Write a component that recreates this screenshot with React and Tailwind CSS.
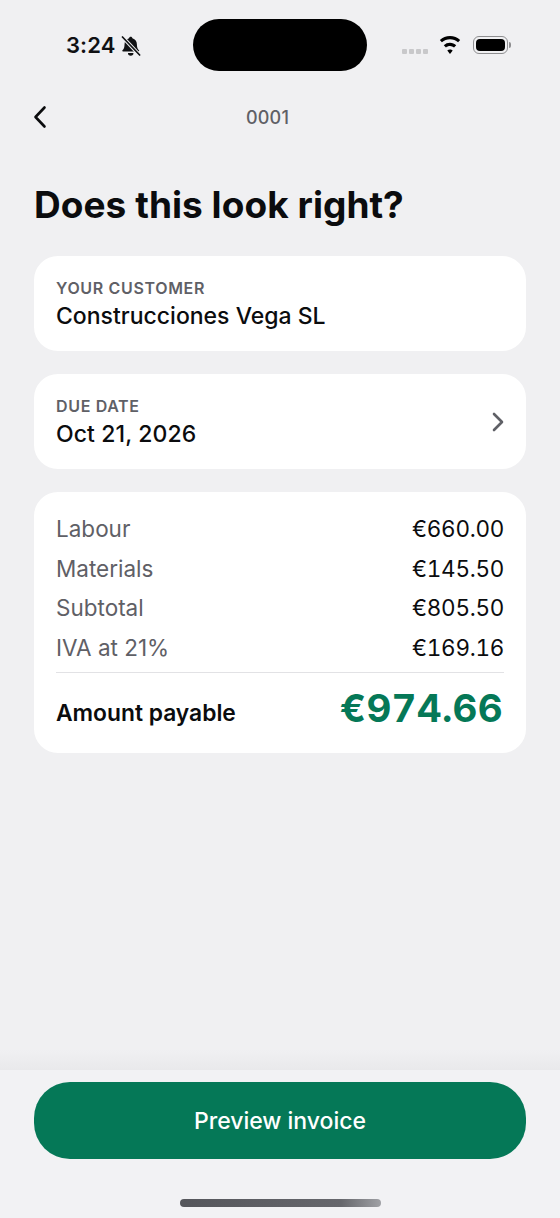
import React from "react";

const rows = [
  ["Labour", "€660.00"],
  ["Materials", "€145.50"],
  ["Subtotal", "€805.50"],
  ["IVA at 21%", "€169.16"],
];

function MutedBell() {
  return (
    <svg width="20" height="20" viewBox="2 1 16.500 17.500" className="ml-[6px] mt-[2px]">
      <path d="M10 1.600c.8 0 1.400.6 1.500 1.300 2.500.7 3.900 2.800 3.900 5.400 0 2.800.6 4 1.800 5.200.4.4.1 1-.4 1H3.200c-.5 0-.8-.6-.4-1C4 12.300 4.600 11.100 4.600 8.300c0-2.600 1.400-4.700 3.900-5.400.1-.7.7-1.300 1.500-1.300z" fill="#111214" />
      <path d="M7.600 15.900h4.800a2.400 2.400 0 0 1-4.800 0z" fill="#111214" />
      <path d="M2.500 1.500 L18 18" stroke="#f0f0f2" strokeWidth="3.200" />
      <path d="M2.800 1.900 L17.800 17.600" stroke="#111214" strokeWidth="1.500" strokeLinecap="round" />
    </svg>
  );
}

function Wifi() {
  return (
    <svg width="24" height="18" viewBox="2.700 0.700 18.600 16.500">
      <path d="M12 3.200c3.600 0 6.900 1.400 9.300 3.700l-1.900 2.100A10.900 10.900 0 0 0 12 6.100 10.900 10.900 0 0 0 4.600 9L2.700 6.900A13.500 13.500 0 0 1 12 3.200z" fill="#000" transform="translate(0 -2.500)" />
      <path d="M12 8.200c2.200 0 4.200.8 5.700 2.200l-2 2.100A5.500 5.500 0 0 0 12 11.100c-1.400 0-2.700.5-3.700 1.400l-2-2.100A8.300 8.300 0 0 1 12 8.200z" fill="#000" transform="translate(0 -1.200)" />
      <path d="M12 13c1 0 1.900.4 2.500 1L12 17.200 9.500 14c.6-.6 1.500-1 2.500-1z" fill="#000" />
    </svg>
  );
}

function Battery() {
  return (
    <div className="flex items-center ml-[11px]">
      <div className="w-[35px] h-[18px] rounded-[6px] border border-[#8e8e90] p-[2px] flex">
        <div className="flex-1 rounded-[4px] bg-black" />
      </div>
      <div className="w-[2px] h-[6px] rounded-r-full bg-[#8e8e90] ml-[1px]" />
    </div>
  );
}

function Label({ children }) {
  return <div className="text-[16px] leading-[20px] font-semibold tracking-[0.65px] text-[#5f6066] uppercase">{children}</div>;
}

export default function App() {
  return (
    <div className="relative w-[560px] h-[1218px] overflow-hidden bg-[#f0f0f2] flex flex-col text-[#0b0c0e] font-['Inter',sans-serif]">
      <div className="h-[92px] shrink-0 flex items-start pl-[66px] pr-[49px] pt-[31px]">
        <div className="flex items-center h-[28px]">
          <span className="text-[22px] leading-[28px] font-semibold tracking-[0.1px] text-[#101113]">3:24</span>
          <MutedBell />
        </div>
        <div className="ml-auto flex items-center h-[28px]">
          <div className="flex gap-[2px] mt-[12px] mr-[10px]">
            <span className="w-[5px] h-[5px] rounded-[1px] bg-[#c8c8ca]" />
            <span className="w-[5px] h-[5px] rounded-[1px] bg-[#c8c8ca]" />
            <span className="w-[5px] h-[5px] rounded-[1px] bg-[#c8c8ca]" />
            <span className="w-[5px] h-[5px] rounded-[1px] bg-[#c8c8ca]" />
          </div>
          <Wifi />
          <Battery />
        </div>
      </div>
      <div className="absolute left-[193px] top-[19px] w-[174px] h-[52px] rounded-[26px] bg-black" />

      <div className="h-[50px] shrink-0 relative flex items-center justify-center px-[34px]">
        <svg width="16" height="24" viewBox="0 0 16 24" className="absolute left-[32px] top-[13px]" fill="none">
          <path d="M12.500 2.500 3.500 12l9 9.500" stroke="#0b0c0e" strokeWidth="2.600" strokeLinecap="round" strokeLinejoin="round" />
        </svg>
        <span className="text-[18px] leading-[24px] font-medium tracking-[0.2px] text-[#5f6066] mr-[25px] mt-[1px]">0001</span>
      </div>

      <main className="flex-1 px-[34px] pt-[37px] flex flex-col">
        <h1 className="text-[37px] leading-[52px] font-bold tracking-[0.05px] text-[#0b0c0e]">Does this look right?</h1>
        <div className="mt-[25px] flex flex-col gap-[23px]">
          <section className="h-[95px] rounded-[24px] bg-white pl-[22px] pr-[23px] pt-[22px]">
            <Label>Your customer</Label>
            <div className="text-[23px] leading-[28px] font-medium mt-[4px]">Construcciones Vega SL</div>
          </section>
          <section className="h-[95px] rounded-[24px] bg-white pl-[22px] pr-[23px] pt-[22px] flex items-start justify-between">
            <div>
              <Label>Due date</Label>
              <div className="text-[23px] leading-[28px] font-medium mt-[4px] tracking-[0.1px]">Oct 21, 2026</div>
            </div>
            <svg width="14" height="20" viewBox="0 0 14 20" fill="none" className="mt-[16px] mr-[-2px]">
              <path d="M3 2l8 8-8 8" stroke="#5f6066" strokeWidth="2.600" strokeLinecap="round" strokeLinejoin="round" />
            </svg>
          </section>
          <section className="h-[261px] rounded-[24px] bg-white pl-[22px] pr-[22px] pt-[17.400px]">
            {rows.map(([k, v]) => (
              <div key={k} className="h-[39.500px] flex items-center justify-between text-[22.500px] leading-[28px]">
                <span className="text-[#5f6066]">{k}</span>
                <span className="text-[#0b0c0e] tabular-nums tracking-[-0.3px]">{v}</span>
              </div>
            ))}
            <div className="h-px bg-[#e2e2e5] mt-[4.600px]" />
            <div className="flex items-center justify-between h-[78px]">
              <span className="text-[22.800px] leading-[28px] font-semibold mt-[2px]">Amount payable</span>
              <span className="text-[38.500px] leading-[48px] font-bold text-[#057857] tracking-[0.3px] mt-[-8px] mr-[1px] tabular-nums">€974.66</span>
            </div>
          </section>
        </div>
      </main>

      <div className="h-[20px] shrink-0 bg-gradient-to-b from-[#f0f0f2] to-[#e9e9eb]" />
      <footer className="h-[148px] shrink-0 bg-[#f2f2f4] px-[34px] pt-[12px] flex flex-col items-center">
        <button className="w-full h-[77px] rounded-[36px] bg-[#057857] text-white text-[23px] leading-[28px] font-medium">Preview invoice</button>
        <div className="mt-[40px] w-[201px] h-[8px] rounded-full bg-gradient-to-r from-[#55565b] via-[#66676c] via-80% to-[#a0a1a5]" />
      </footer>
    </div>
  );
}
